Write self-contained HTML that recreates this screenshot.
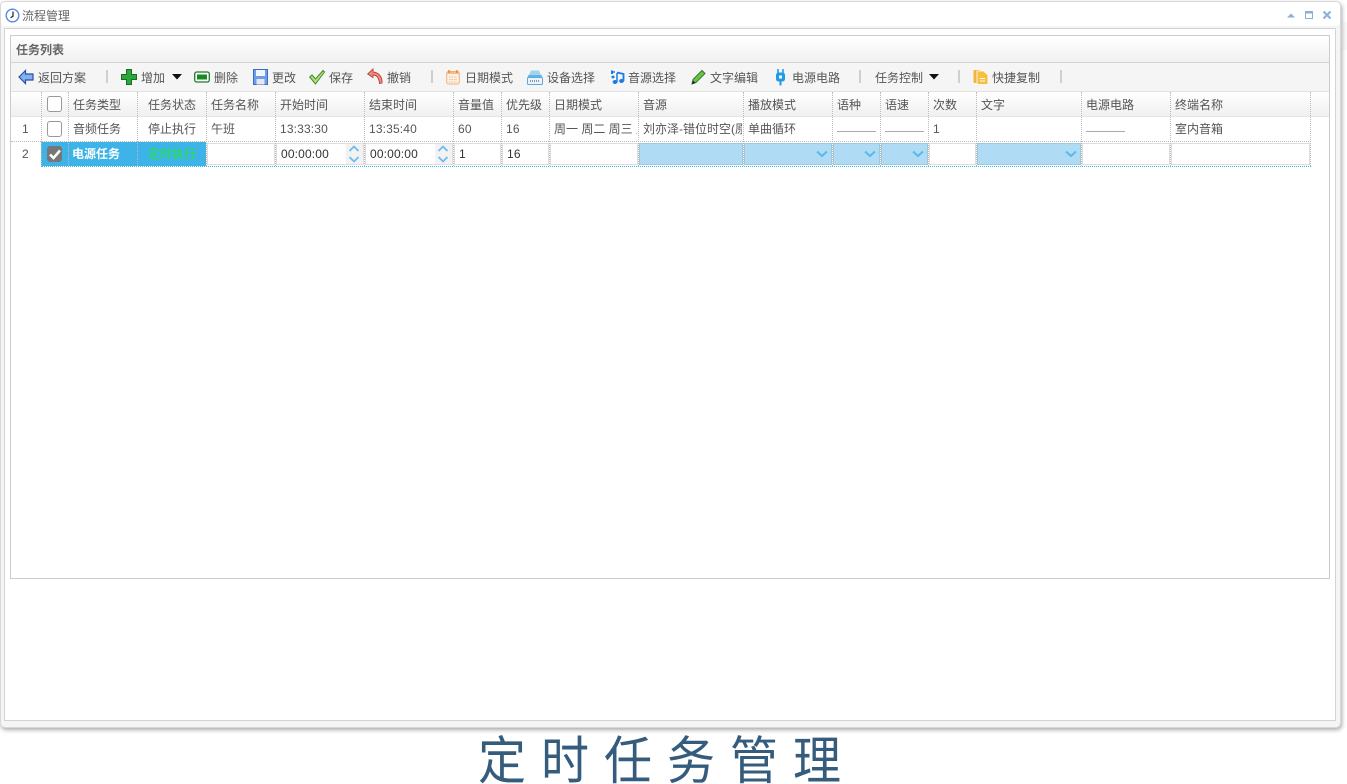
<!DOCTYPE html>
<html><head><meta charset="utf-8"><style>
html,body{margin:0;padding:0;background:#fff}
#r{position:relative;width:1347px;height:784px;overflow:hidden;background:#fff;font:12px/16px "Liberation Sans","Noto Sans CJK SC",sans-serif;color:#555}
#r div,#r span.a,#r svg{position:absolute}
.t{white-space:nowrap;color:#555}
.n{letter-spacing:.15px}
.v{position:absolute;width:0;border-left:1px dotted #bbb}
.h{position:absolute;height:0;border-top:1px dotted #bbb}
.s{width:2px;height:13px;background:#cfcfcf;top:70px}
.d{width:39px;height:1px;background:#aaa;top:131px}
.cb{width:13px;height:14px;border:1px solid #999;border-radius:3px;background:#fff;box-sizing:content-box}
.i{background:#fff;top:143px;height:22px;box-shadow:inset 0 0 0 1px #ddd}
.b{background:#afdcf4;top:143px;height:22px;box-shadow:inset 0 0 0 1px #a0c8dc}
</style></head><body><div id="r">
<div style="left:1342px;top:22px;width:5px;height:28px;background:#f8f8f8"></div>
<div style="left:0;top:1px;width:1341px;height:727px;background:#f5f5f5;border:1px solid #d8d8d8;border-radius:5px;box-sizing:border-box;box-shadow:1px 2px 4px #aaa"></div>
<div style="left:1px;top:2px;width:1339px;height:24px;background:#fff;border-radius:4px"></div>
<div style="left:4px;top:28px;width:1332px;height:693px;background:#fff;border:1px solid #d4d4d4;box-sizing:border-box"></div>
<svg style="left:5px;top:8px" width="15" height="15" viewBox="0 0 15 15"><circle cx="7.5" cy="7.5" r="6.3" fill="#fff" stroke="#5a86e8" stroke-width="1.4"/><path d="M8 3.5V8.2L5.5 9.8" fill="none" stroke="#234" stroke-width="1.3"/></svg>
<div class="t" style="left:22px;top:8px;color:#666">流程管理</div>
<svg style="left:1286px;top:10px" width="48" height="11" viewBox="0 0 48 11"><path d="M1 7.5L5 3.5L9 7.5Z" fill="#8caedc"/><path d="M19.5 1.5H26.5V8.5H19.5Z" fill="none" stroke="#8caedc"/><path d="M19.5 2.5H26.5" stroke="#8caedc" stroke-width="2"/><path d="M37.5 1.5L44.5 8.5M44.5 1.5L37.5 8.5" stroke="#8caedc" stroke-width="2"/></svg>

<div style="left:10px;top:35px;width:1320px;height:544px;background:#fff;border:1px solid #ccc;box-sizing:border-box"></div>
<div style="left:11px;top:36px;width:1318px;height:26px;background:linear-gradient(#fff,#f1f1f1);border-bottom:1px solid #d4d4d4"></div>
<div class="t" style="left:16px;top:42px;font-weight:bold;color:#666">任务列表</div>
<div style="left:11px;top:63px;width:1318px;height:28px;background:#f5f5f5;border-bottom:1px solid #e2e2e2"></div>

<svg style="left:18px;top:69px" width="16" height="16" viewBox="0 0 16 16"><path d="M7.5 1.5L1 8L7.5 14.5V11H15V5H7.5Z" fill="#7fb2ee" stroke="#2a4fa8" stroke-width="1.2"/></svg>
<div class="t" style="left:38px;top:70px">返回方案</div>
<div class="s" style="left:106px"></div>
<svg style="left:121px;top:69px" width="16" height="16" viewBox="0 0 16 16"><path d="M5.5 .5H10.5V5.5H15.5V10.5H10.5V15.5H5.5V10.5H.5V5.5H5.5Z" fill="#2aa83a" stroke="#1d6b28" stroke-width="1"/></svg>
<div class="t" style="left:141px;top:70px">增加</div>
<svg style="left:172px;top:74px" width="10" height="6" viewBox="0 0 10 6"><path d="M0 0H10L5 5.5Z" fill="#111"/></svg>
<svg style="left:194px;top:71px" width="16" height="12" viewBox="0 0 16 12"><rect x=".7" y="1" width="14.6" height="10" rx="2" fill="#fff" stroke="#1f7a2c" stroke-width="1.3"/><rect x="3" y="3.5" width="10" height="5" fill="#178a24"/></svg>
<div class="t" style="left:214px;top:70px">删除</div>
<svg style="left:253px;top:69px" width="15" height="16" viewBox="0 0 15 16"><rect x=".5" y=".5" width="14" height="15" fill="#6d9ee8" stroke="#3a6cc8"/><rect x="3" y="1" width="9" height="6" fill="#f2f6fc"/><rect x="3.5" y="10" width="8" height="5.5" fill="#e4e8f0"/></svg>
<div class="t" style="left:272px;top:70px">更改</div>
<svg style="left:309px;top:69px" width="16" height="16" viewBox="0 0 16 16"><path d="M.7 8L3 6L6.5 10L14 1.5L15.5 3L6.5 15Z" fill="#b6e07a" stroke="#3c8a2a"/></svg>
<div class="t" style="left:329px;top:70px">保存</div>
<svg style="left:367px;top:68px" width="16" height="17" viewBox="0 0 16 17"><path d="M6 1L.7 6L6 9.5V7C10 7 12 10 12.5 15.5L15 15C15.5 9 12 4.5 6 4Z" fill="#f08a80" stroke="#b8453c" stroke-width=".9"/></svg>
<div class="t" style="left:387px;top:70px">撤销</div>
<div class="s" style="left:431px"></div>
<svg style="left:446px;top:69px" width="14" height="16" viewBox="0 0 14 16"><rect x=".7" y="2.5" width="12.6" height="12.5" rx="2" fill="#fdf1e4" stroke="#f0b07a"/><rect x="1" y="3" width="12" height="2" fill="#f7bb88"/><path d="M3 1V4M11 1V4" stroke="#e8823c" stroke-width="1.4"/><path d="M3 8H11M3 10.5H11M3 13H11" stroke="#f0bc90" stroke-dasharray="1.5 1"/></svg>
<div class="t" style="left:465px;top:70px">日期模式</div>
<svg style="left:527px;top:70px" width="16" height="15" viewBox="0 0 16 15"><path d="M4 .5H12L13.5 4H2.5Z" fill="#9ed3ef"/><path d="M2 4.5H14L15.5 7H.5Z" fill="#5fb4e4"/><rect x=".5" y="7.5" width="15" height="7" rx="1" fill="#e8f4fb" stroke="#5fa8d8"/><path d="M3 11H13" stroke="#336" stroke-dasharray="1 1"/></svg>
<div class="t" style="left:547px;top:70px">设备选择</div>
<svg style="left:610px;top:69px" width="15" height="16" viewBox="0 0 15 16"><path d="M2 1.5V5" stroke="#1c7ce4" stroke-width="2"/><path d="M1.5 3H5" stroke="#1c7ce4" stroke-width="1.5"/><path d="M7 3.5L13.5 5V12" fill="none" stroke="#1c7ce4" stroke-width="1.8"/><path d="M7 4V13" stroke="#1c7ce4" stroke-width="1.5"/><ellipse cx="5" cy="13" rx="2.4" ry="2" fill="#1c7ce4"/><ellipse cx="11.5" cy="12" rx="2.4" ry="2" fill="#1c7ce4"/><ellipse cx="3" cy="8" rx="1.6" ry="1.4" fill="#1c7ce4"/></svg>
<div class="t" style="left:628px;top:70px">音源选择</div>
<svg style="left:691px;top:69px" width="15" height="16" viewBox="0 0 15 16"><path d="M1 15L2 10.5L11 1.5L14 4.5L5 13.5Z" fill="#6cc24a" stroke="#2f7a24"/><path d="M1 15L2 11.5L4.5 14Z" fill="#223"/></svg>
<div class="t" style="left:710px;top:70px">文字编辑</div>
<svg style="left:775px;top:68px" width="11" height="18" viewBox="0 0 11 18"><path d="M3 1V5M8 1V5" stroke="#1f9ce8" stroke-width="1.6"/><rect x="1" y="4.5" width="9" height="9" rx="2.5" fill="#1f9ce8"/><path d="M5.5 13V17.5" stroke="#1f9ce8" stroke-width="2"/><rect x="4" y="7.5" width="3" height="3" fill="#fff"/></svg>
<div class="t" style="left:792px;top:70px">电源电路</div>
<div class="s" style="left:859px"></div>
<div class="t" style="left:875px;top:70px">任务控制</div>
<svg style="left:929px;top:74px" width="10" height="6" viewBox="0 0 10 6"><path d="M0 0H10L5 5.5Z" fill="#111"/></svg>
<div class="s" style="left:958px"></div>
<svg style="left:973px;top:69px" width="16" height="16" viewBox="0 0 16 16"><rect x=".5" y="1" width="7" height="13" rx="1" fill="#f3b43a"/><path d="M4 2H10.5L15 6V15.5H4Z" fill="#f7bf3f" stroke="#fff" stroke-width=".8"/><path d="M7 9.5H12M7 12H12" stroke="#fff"/></svg>
<div class="t" style="left:992px;top:70px">快捷复制</div>
<div class="s" style="left:1060px"></div>

<div style="left:11px;top:92px;width:1318px;height:24px;background:linear-gradient(#fff,#f0f0f0);border-bottom:1px solid #e4e4e4"></div>

<div style="left:41px;top:142px;width:165px;height:24px;background:#3db3e8"></div>
<div class="i" style="left:207px;width:68px"></div>
<div class="i" style="left:276px;width:88px"></div>
<div style="left:346px;top:144px;width:17px;height:20px;background:#f2f2f2"></div>
<div class="i" style="left:365px;width:88px"></div>
<div style="left:435px;top:144px;width:17px;height:20px;background:#f2f2f2"></div>
<div class="i" style="left:454px;width:47px"></div>
<div class="i" style="left:502px;width:47px"></div>
<div class="i" style="left:550px;width:88px"></div>
<div class="b" style="left:639px;width:104px"></div>
<div class="b" style="left:744px;width:88px"></div>
<div class="b" style="left:833px;width:47px"></div>
<div class="b" style="left:881px;width:47px"></div>
<div class="i" style="left:929px;width:47px"></div>
<div class="b" style="left:977px;width:104px"></div>
<div class="i" style="left:1082px;width:88px"></div>
<div class="i" style="left:1171px;width:139px"></div>

<div class="v" style="left:41px;top:92px;height:74px"></div>
<div class="v" style="left:68px;top:92px;height:74px"></div>
<div class="v" style="left:137px;top:92px;height:74px"></div>
<div class="v" style="left:206px;top:92px;height:74px"></div>
<div class="v" style="left:275px;top:92px;height:74px"></div>
<div class="v" style="left:364px;top:92px;height:74px"></div>
<div class="v" style="left:453px;top:92px;height:74px"></div>
<div class="v" style="left:501px;top:92px;height:74px"></div>
<div class="v" style="left:549px;top:92px;height:74px"></div>
<div class="v" style="left:638px;top:92px;height:74px"></div>
<div class="v" style="left:743px;top:92px;height:74px"></div>
<div class="v" style="left:832px;top:92px;height:74px"></div>
<div class="v" style="left:880px;top:92px;height:74px"></div>
<div class="v" style="left:928px;top:92px;height:74px"></div>
<div class="v" style="left:976px;top:92px;height:74px"></div>
<div class="v" style="left:1081px;top:92px;height:74px"></div>
<div class="v" style="left:1170px;top:92px;height:74px"></div>
<div class="v" style="left:1310px;top:92px;height:74px"></div>
<div class="h" style="left:11px;top:141px;width:1300px"></div>
<div class="h" style="left:41px;top:166px;width:1270px;border-top-color:#3db3e8"></div>

<div class="cb" style="left:47px;top:96px"></div>
<div class="cb" style="left:47px;top:121px"></div>
<div class="cb" style="left:47px;top:146px;background:#777;border-color:#777"></div>
<svg style="left:48px;top:148px" width="14" height="13" viewBox="0 0 14 13"><path d="M2 6.5L5.5 10L12 2.5" fill="none" stroke="#fff" stroke-width="2.5"/></svg>

<div class="t" style="left:73px;top:97px">任务类型</div>
<div class="t" style="left:148px;top:97px">任务状态</div>
<div class="t" style="left:211px;top:97px">任务名称</div>
<div class="t" style="left:280px;top:97px">开始时间</div>
<div class="t" style="left:369px;top:97px">结束时间</div>
<div class="t" style="left:458px;top:97px">音量值</div>
<div class="t" style="left:506px;top:97px">优先级</div>
<div class="t" style="left:554px;top:97px">日期模式</div>
<div class="t" style="left:643px;top:97px">音源</div>
<div class="t" style="left:748px;top:97px">播放模式</div>
<div class="t" style="left:837px;top:97px">语种</div>
<div class="t" style="left:885px;top:97px">语速</div>
<div class="t" style="left:933px;top:97px">次数</div>
<div class="t" style="left:981px;top:97px">文字</div>
<div class="t" style="left:1086px;top:97px">电源电路</div>
<div class="t" style="left:1175px;top:97px">终端名称</div>

<div class="t" style="left:22px;top:121px">1</div>
<div class="t" style="left:73px;top:121px">音频任务</div>
<div class="t" style="left:148px;top:121px">停止执行</div>
<div class="t" style="left:211px;top:121px">午班</div>
<div class="t n" style="left:280px;top:121px">13:33:30</div>
<div class="t n" style="left:369px;top:121px">13:35:40</div>
<div class="t n" style="left:458px;top:121px">60</div>
<div class="t n" style="left:506px;top:121px">16</div>
<div class="t" style="left:554px;top:121px;width:83px;overflow:hidden">周一 周二 周三 周四</div>
<div class="t" style="left:643px;top:121px;width:99px;overflow:hidden">刘亦泽-错位时空(原唱)</div>
<div class="t" style="left:748px;top:121px">单曲循环</div>
<div class="d" style="left:837px"></div>
<div class="d" style="left:885px"></div>
<div class="t" style="left:933px;top:121px">1</div>
<div class="d" style="left:1086px"></div>
<div class="t" style="left:1175px;top:121px">室内音箱</div>

<div class="t" style="left:22px;top:146px">2</div>
<div class="t" style="left:72px;top:146px;color:#fff;font-weight:bold">电源任务</div>
<div class="t" style="left:148px;top:146px;color:#22e83a">定时执行</div>
<div class="t n" style="left:281px;top:146px;color:#333">00:00:00</div>
<div class="t n" style="left:370px;top:146px;color:#333">00:00:00</div>
<div class="t" style="left:459px;top:146px;color:#333">1</div>
<div class="t n" style="left:507px;top:146px;color:#333">16</div>

<svg style="left:348px;top:145px" width="12" height="18" viewBox="0 0 12 18"><path d="M1.5 6L6 1.5L10.5 6M1.5 12L6 16.5L10.5 12" fill="none" stroke="#6cbcf0" stroke-width="1.8"/></svg>
<svg style="left:437px;top:145px" width="12" height="18" viewBox="0 0 12 18"><path d="M1.5 6L6 1.5L10.5 6M1.5 12L6 16.5L10.5 12" fill="none" stroke="#6cbcf0" stroke-width="1.8"/></svg>
<svg style="left:816px;top:150px" width="12" height="8" viewBox="0 0 12 8"><path d="M1 1.5L6 6L11 1.5" fill="none" stroke="#5cb8ec" stroke-width="2"/></svg>
<svg style="left:864px;top:150px" width="12" height="8" viewBox="0 0 12 8"><path d="M1 1.5L6 6L11 1.5" fill="none" stroke="#5cb8ec" stroke-width="2"/></svg>
<svg style="left:912px;top:150px" width="12" height="8" viewBox="0 0 12 8"><path d="M1 1.5L6 6L11 1.5" fill="none" stroke="#5cb8ec" stroke-width="2"/></svg>
<svg style="left:1065px;top:150px" width="12" height="8" viewBox="0 0 12 8"><path d="M1 1.5L6 6L11 1.5" fill="none" stroke="#5cb8ec" stroke-width="2"/></svg>

<div class="t" style="left:478px;top:728px;font-size:48px;line-height:64px;letter-spacing:15px;color:#355c7d;transform:scaleY(1.08);transform-origin:0 0">定时任务管理</div>
</div></body></html>
